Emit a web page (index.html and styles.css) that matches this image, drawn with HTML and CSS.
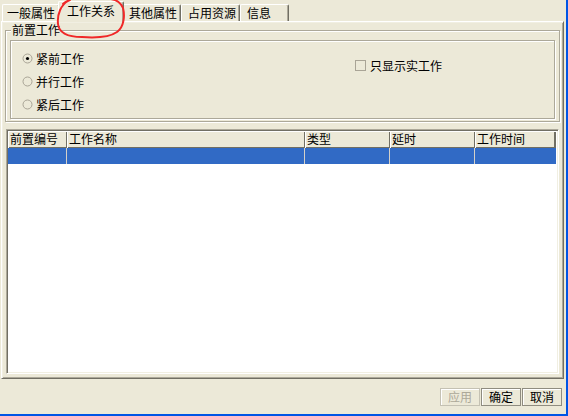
FILE: index.html
```html
<!DOCTYPE html>
<html>
<head>
<meta charset="utf-8">
<link rel="stylesheet" href="styles.css">
</head>
<body>
<div class="window">
  <div class="tabs">
    <div class="tab first">一般属性</div>
    <div class="tab active">工作关系</div>
    <div class="tab t3">其他属性</div>
    <div class="tab t4">占用资源</div>
    <div class="tab t5">信息</div>
  </div>
  <div class="pane">
    <fieldset class="group">
      <legend>前置工作</legend>
      <div class="panel">
        <div class="radios">
          <div class="radio"><svg class="rb" width="11" height="11" viewBox="0 0 11 11"><circle cx="5.5" cy="5.5" r="4.5" fill="none" stroke="#A9A496" stroke-width="1"/><circle cx="5.5" cy="5.5" r="1.6" fill="#000"/></svg><span>紧前工作</span></div>
          <div class="radio"><svg class="rb" width="11" height="11" viewBox="0 0 11 11"><circle cx="5.5" cy="5.5" r="4.5" fill="none" stroke="#A9A496" stroke-width="1"/></svg><span>并行工作</span></div>
          <div class="radio"><svg class="rb" width="11" height="11" viewBox="0 0 11 11"><circle cx="5.5" cy="5.5" r="4.5" fill="none" stroke="#A9A496" stroke-width="1"/></svg><span>紧后工作</span></div>
        </div>
        <div class="check"><span class="cb"></span><span>只显示实工作</span></div>
      </div>
    </fieldset>
    <div class="list">
      <div class="lhead">
        <div class="hc c1">前置编号</div>
        <div class="hc c2">工作名称</div>
        <div class="hc c3">类型</div>
        <div class="hc c4">延时</div>
        <div class="hc c5">工作时间</div>
      </div>
      <div class="lrow">
        <div class="rc c1"></div>
        <div class="rc c2"></div>
        <div class="rc c3"></div>
        <div class="rc c4"></div>
        <div class="rc c5"></div>
      </div>
    </div>
  </div>
  <div class="buttons">
    <button class="btn disabled">应用</button>
    <button class="btn">确定</button>
    <button class="btn">取消</button>
  </div>
  <svg class="annot" width="140" height="45" viewBox="0 0 140 45">
    <path d="M63 4 C65 2, 67 1, 70 0 M68 1 C61 5, 57 14, 58 24 C59 33, 68 37, 82 37 C96 38, 110 37, 117 32 C124 27, 125 16, 123 8 C121 3, 117 0, 111 -1" fill="none" stroke="#F02828" stroke-width="2" stroke-linecap="round"/>
  </svg>
</div>
</body>
</html>
```
FILE: styles.css
```css
* { box-sizing: border-box; }

body {
  margin: 0;
  background: #ECE9D8;
  font-family: "Noto Sans CJK SC", "Noto Sans CJK JP", sans-serif;
  font-size: 12px;
  line-height: 14px;
  color: #000;
}

.window {
  position: relative;
  width: 568px;
  height: 416px;
  border-right: 2px solid #0055E5;
  border-bottom: 2px solid #0055E5;
  display: flex;
  flex-direction: column;
  overflow: hidden;
}

.tabs {
  display: flex;
  align-items: flex-end;
  height: 21px;
  padding-left: 2px;
  position: relative;
  z-index: 2;
}

.tab {
  height: 17px;
  padding: 1px 0 0 6px;
  background: #ECE9D8;
  border-top: 1px solid #fff;
  border-left: 1px solid #fff;
  border-right: 1px solid #716F64;
  border-radius: 2px 2px 0 0;
  box-shadow: inset -1px 0 0 #ACA899;
  white-space: nowrap;
}
.tab.first { width: 58px; padding-left: 4px; }
.tab.active {
  width: 66px;
  height: 21px;
  margin: 0 -2px -1px -2px;
  padding: 2px 0 0 8px;
  position: relative;
  z-index: 3;
}
.tab.t3 { width: 59px; }
.tab.t4 { width: 59px; }
.tab.t5 { width: 49px; padding-left: 6px; }

.pane {
  margin-left: 1px;
  width: 563px;
  height: 358px;
  border-top: 1px solid #fff;
  border-left: 1px solid #fff;
  border-right: 1px solid #716F64;
  border-bottom: 1px solid #716F64;
  box-shadow: inset 1px 1px 0 #F1EFE2, inset -1px -1px 0 #ACA899;
  padding: 1px;
  display: flex;
  flex-direction: column;
  position: relative;
  z-index: 1;
}

.group {
  margin: 0 2px;
  height: 99px;
  padding: 3px 4px 2px 4px;
  border: 1px solid #ACA899;
  box-shadow: inset 1px 1px 0 #fff, 1px 1px 0 #fff;
  min-width: 0;
}
.group legend {
  padding: 0 1px;
  margin-left: 1px;
  background: #ECE9D8;
  position: relative;
}

.panel {
  height: 79px;
  display: flex;
  align-items: flex-start;
  border: 1px solid #ACA899;
  box-shadow: inset 1px 1px 0 #fff, 1px 1px 0 #fff;
  padding-left: 11px;
}

.radios {
  width: 100px;
  padding-top: 6px;
  display: flex;
  flex-direction: column;
}
.radio {
  height: 23px;
  display: flex;
  align-items: center;
  gap: 3px;
}
.rb { display: block; flex: none; }

.check {
  margin-left: 233px;
  margin-top: 18px;
  height: 13px;
  display: flex;
  align-items: center;
  gap: 4px;
}
.cb {
  width: 11px;
  height: 11px;
  border: 1px solid #A9A496;
  display: block;
  flex: none;
}

.list {
  flex: 1;
  margin: 7px 3px 3px 3px;
  background: #fff;
  border-top: 1px solid #ACA899;
  border-left: 1px solid #ACA899;
  border-right: 1px solid #fff;
  border-bottom: 1px solid #fff;
  box-shadow: inset 1px 1px 0 #716F64, inset -1px -1px 0 #F1EFE2;
  padding: 1px;
}

.lhead {
  display: flex;
  height: 17px;
}
.hc {
  height: 17px;
  background: #ECE9D8;
  padding: 1px 0 0 2px;
  box-shadow: inset 1px 1px 0 #fff, inset -1px -1px 0 #716F64;
  white-space: nowrap;
}
.hc.c5 { box-shadow: inset 1px 1px 0 #fff, inset -1px -1px 0 #716F64, inset -2px 0 0 #716F64; }

.c1 { width: 59px; }
.c2 { width: 238px; }
.c3 { width: 85px; }
.c4 { width: 85px; }
.c5 { width: 81px; }

.lrow {
  display: flex;
  height: 16px;
  background: #316AC5;
  width: 548px;
}
.rc {
  height: 16px;
  box-shadow: inset -1px 0 0 #D4D0C8;
}
.rc.c5 { box-shadow: none; }

.buttons {
  display: flex;
  justify-content: flex-end;
  gap: 1px;
  padding: 9px 4px 0 0;
}
.btn {
  width: 40px;
  height: 18px;
  margin: 0;
  padding: 0;
  font: inherit;
  line-height: 16px;
  color: #000;
  background: #ECE9D8;
  border: 1px solid #8F8C80;
  box-shadow: inset 1px 1px 0 #fff;
  border-radius: 0;
}
.btn.disabled {
  color: #ACA899;
  border-color: #C4C1B3;
}

.annot {
  position: absolute;
  left: 0;
  top: 0;
  z-index: 10;
  pointer-events: none;
}
```
